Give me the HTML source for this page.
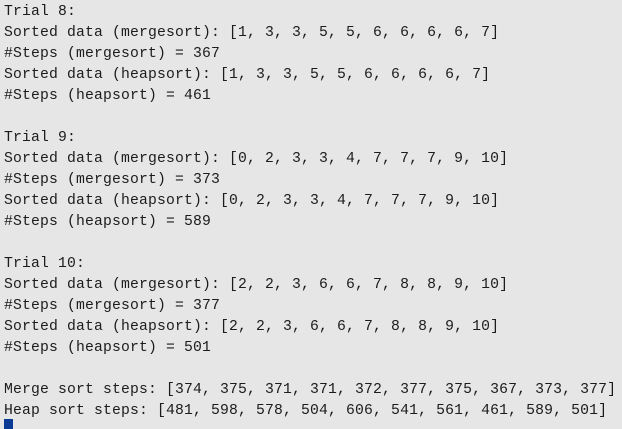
<!DOCTYPE html>
<html><head><style>
html,body{margin:0;padding:0;background:#e6e6e6;width:622px;height:429px;overflow:hidden}
pre{margin:0;padding:2px 0 0 4px;font-family:"Liberation Mono",monospace;font-size:14.75px;letter-spacing:0.15px;line-height:21px;color:#1c1c1c}
.cur{position:absolute;left:4px;top:419px;width:9px;height:10px;background:#0a3a94}
</style></head><body><pre>Trial 8:
Sorted data (mergesort): [1, 3, 3, 5, 5, 6, 6, 6, 6, 7]
#Steps (mergesort) = 367
Sorted data (heapsort): [1, 3, 3, 5, 5, 6, 6, 6, 6, 7]
#Steps (heapsort) = 461

Trial 9:
Sorted data (mergesort): [0, 2, 3, 3, 4, 7, 7, 7, 9, 10]
#Steps (mergesort) = 373
Sorted data (heapsort): [0, 2, 3, 3, 4, 7, 7, 7, 9, 10]
#Steps (heapsort) = 589

Trial 10:
Sorted data (mergesort): [2, 2, 3, 6, 6, 7, 8, 8, 9, 10]
#Steps (mergesort) = 377
Sorted data (heapsort): [2, 2, 3, 6, 6, 7, 8, 8, 9, 10]
#Steps (heapsort) = 501

Merge sort steps: [374, 375, 371, 371, 372, 377, 375, 367, 373, 377]
Heap sort steps: [481, 598, 578, 504, 606, 541, 561, 461, 589, 501]</pre><div class="cur"></div></body></html>
